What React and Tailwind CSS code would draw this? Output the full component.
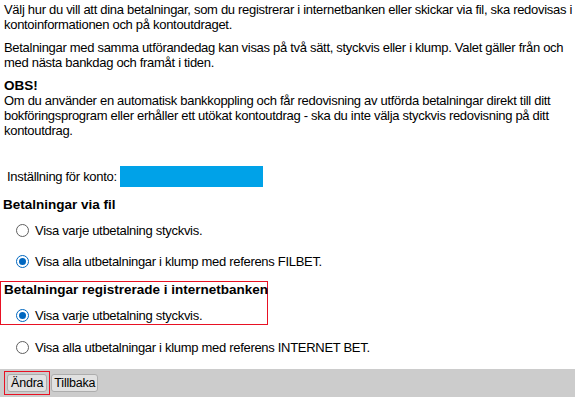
import { useState } from 'react'

function Radio({ checked, label, onClick }) {
  return (
    <label className="flex items-center h-[16px] pl-[12px] cursor-pointer whitespace-nowrap" onClick={onClick}>
      <span
        className={
          'w-[13px] h-[13px] rounded-full border flex items-center justify-center bg-white ' +
          (checked ? 'border-[#0067c0]' : 'border-[#5f5f5f]')
        }
      >
        {checked && <span className="w-[7px] h-[7px] rounded-full bg-[#0067c0]" />}
      </span>
      <span className="ml-[6px]">{label}</span>
    </label>
  )
}

export default function App() {
  const [fil, setFil] = useState('klump')
  const [net, setNet] = useState('styck')

  return (
    <div
      className="w-[575px] h-[397px] bg-white text-black text-[13px] leading-[15px] tracking-[-0.3px] flex flex-col overflow-hidden"
      style={{ fontFamily: '"Liberation Sans", Arial, sans-serif' }}
    >
      <div className="flex-1 px-[4px] pt-[2px] whitespace-nowrap">
        <p>
          Välj hur du vill att dina betalningar, som du registrerar i internetbanken eller skickar via fil, ska redovisas i
          <br />
          kontoinformationen och på kontoutdraget.
        </p>
        <p className="mt-[8px]">
          Betalningar med samma utförandedag kan visas på två sätt, styckvis eller i klump. Valet gäller från och
          <br />
          med nästa bankdag och framåt i tiden.
        </p>
        <p className="mt-[8px] font-bold text-[13.5px] tracking-normal">OBS!</p>
        <p>
          Om du använder en automatisk bankkoppling och får redovisning av utförda betalningar direkt till ditt
          <br />
          bokföringsprogram eller erhåller ett utökat kontoutdrag - ska du inte välja styckvis redovisning på ditt
          <br />
          kontoutdrag.
        </p>

        <div className="mt-[28px] flex items-center pl-[3px]">
          <span>Inställning för konto:</span>
          <span className="ml-[3px] w-[143px] h-[21px] bg-[#00a2e8]" />
        </div>

        <h3 className="mt-[10px] -ml-[1px] font-bold text-[13.5px] tracking-normal">Betalningar via fil</h3>
        <div className="mt-[10px]">
          <Radio checked={fil === 'styck'} label="Visa varje utbetalning styckvis." onClick={() => setFil('styck')} />
        </div>
        <div className="mt-[15px]">
          <Radio
            checked={fil === 'klump'}
            label="Visa alla utbetalningar i klump med referens FILBET."
            onClick={() => setFil('klump')}
          />
        </div>

        <div className="mt-[12px] -ml-[4px] w-[268px] h-[44px] border border-[#e81123] pl-[3px]">
          <h3 className="font-bold text-[13.5px] tracking-normal">Betalningar registrerade i internetbanken</h3>
          <div className="mt-[10px]">
            <Radio
              checked={net === 'styck'}
              label="Visa varje utbetalning styckvis."
              onClick={() => setNet('styck')}
            />
          </div>
        </div>
        <div className="mt-[14px]">
          <Radio
            checked={net === 'klump'}
            label="Visa alla utbetalningar i klump med referens INTERNET BET."
            onClick={() => setNet('klump')}
          />
        </div>
      </div>

      <div className="h-[28px] bg-[#cccccc] flex items-center pl-[4px] gap-[1px] text-[12.5px] tracking-[-0.2px]">
        <div className="border border-[#e81123] p-[2px]">
          <button className="h-[18px] px-[3px] bg-[#e1e1e1] border border-[#adadad] rounded-[3px] leading-[15px]">
            Ändra
          </button>
        </div>
        <button className="h-[18px] px-[2px] bg-[#e1e1e1] border border-[#adadad] rounded-[3px] leading-[15px]">
          Tillbaka
        </button>
      </div>
    </div>
  )
}
